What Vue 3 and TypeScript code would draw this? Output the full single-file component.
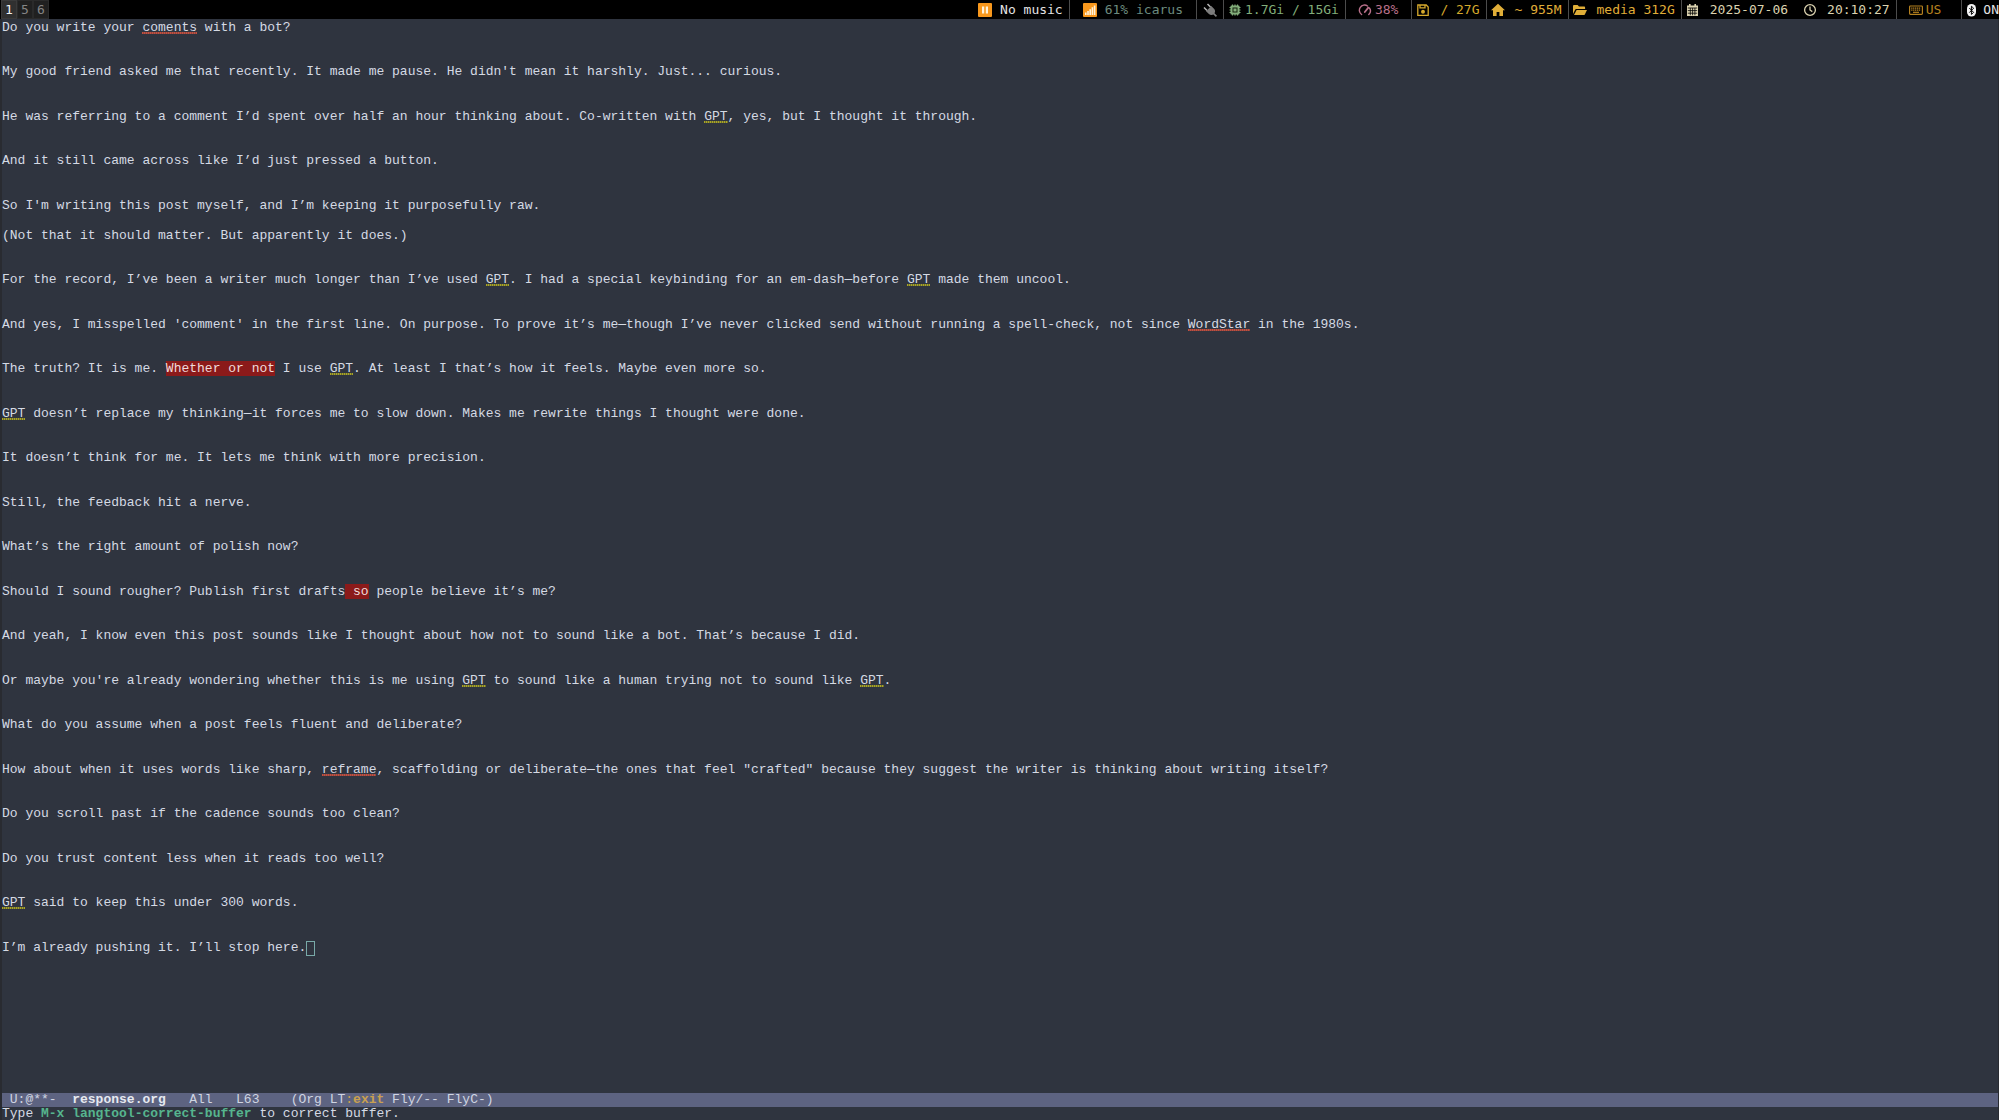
<script setup lang="ts">
type Kind = 'typo' | 'grammar' | 'flagged'
interface Run {
  text: string
  kind?: Kind
}

// {word} = spelling, [word] = style hint, <words> = flagged phrase
const source: string[] = [
  'Do you write your {coments} with a bot?', '', '',
  "My good friend asked me that recently. It made me pause. He didn't mean it harshly. Just... curious.", '', '',
  'He was referring to a comment I’d spent over half an hour thinking about. Co-written with [GPT], yes, but I thought it through.', '', '',
  'And it still came across like I’d just pressed a button.', '', '',
  "So I'm writing this post myself, and I’m keeping it purposefully raw.", '',
  '(Not that it should matter. But apparently it does.)', '', '',
  'For the record, I’ve been a writer much longer than I’ve used [GPT]. I had a special keybinding for an em-dash—before [GPT] made them uncool.', '', '',
  "And yes, I misspelled 'comment' in the first line. On purpose. To prove it’s me—though I’ve never clicked send without running a spell-check, not since {WordStar} in the 1980s.", '', '',
  'The truth? It is me. <Whether or not> I use [GPT]. At least I that’s how it feels. Maybe even more so.', '', '',
  '[GPT] doesn’t replace my thinking—it forces me to slow down. Makes me rewrite things I thought were done.', '', '',
  'It doesn’t think for me. It lets me think with more precision.', '', '',
  'Still, the feedback hit a nerve.', '', '',
  'What’s the right amount of polish now?', '', '',
  'Should I sound rougher? Publish first drafts< so> people believe it’s me?', '', '',
  'And yeah, I know even this post sounds like I thought about how not to sound like a bot. That’s because I did.', '', '',
  "Or maybe you're already wondering whether this is me using [GPT] to sound like a human trying not to sound like [GPT].", '', '',
  'What do you assume when a post feels fluent and deliberate?', '', '',
  'How about when it uses words like sharp, {reframe}, scaffolding or deliberate—the ones that feel "crafted" because they suggest the writer is thinking about writing itself?', '', '',
  'Do you scroll past if the cadence sounds too clean?', '', '',
  'Do you trust content less when it reads too well?', '', '',
  '[GPT] said to keep this under 300 words.', '', '',
  'I’m already pushing it. I’ll stop here.',
]

const kinds: Record<string, Kind> = { '{': 'typo', '[': 'grammar', '<': 'flagged' }

function parse(line: string): Run[] {
  return line
    .split(/(\{[^}]*\}|\[[^\]]*\]|<[^>]*>)/)
    .filter((part) => part !== '')
    .map((part) => {
      const kind = kinds[part[0]]
      return kind ? { text: part.slice(1, -1), kind } : { text: part }
    })
}

const lines: Run[][] = source.map(parse)
const workspaces = [1, 5, 6]
const current = 1

// Column spacing is significant in the mode line
const modeFlags = ' U:@**-  '
const modePosition = '   All   L63    (Org LT'
</script>

<template>
  <div class="screen">
    <header class="bar">
      <nav class="spaces" aria-label="Workspaces">
        <button v-for="w in workspaces" :key="w" type="button" class="space" :class="{ active: w === current }">{{ w }}</button>
      </nav>
      <div class="status">
        <span class="seg white flush">
          <svg viewBox="0 0 14 14"><rect width="14" height="14" rx="1" fill="#f8981d" /><path d="M4 3.500h2.200v7H4zM7.800 3.500H10v7H7.800z" fill="#fff3dc" /></svg>
          <span>No music</span>
        </span>
        <span class="seg mint roomy">
          <svg viewBox="0 0 14 14"><rect width="14" height="14" rx="1" fill="#f8981d" /><path d="M2 9.500h1.600V12H2zM4.200 8h1.600v4H4.200zM6.400 6.200H8V12H6.400zM8.600 4.300h1.600V12H8.600zM10.800 2.500h1.600V12h-1.600z" fill="#fff3dc" /></svg>
          <span>61% icarus</span>
        </span>
        <span class="seg plug">
          <svg viewBox="0 0 14 14"><path d="M1 4.500l3 3M4.500 1l3 3" stroke="#b5b5b5" stroke-width="1.500" /><path d="M3 8.200L8.300 3l2.900 3c1.200 1.500 1 3 .3 4.200L14 12.800 12.900 14l-2.500-2.400c-1.500.8-3.300.6-4.500-.5z" fill="#7c7c7c" /></svg>
        </span>
        <span class="seg green tight">
          <svg viewBox="0 0 14 14"><path d="M4.500 1.500v11M7 1.500v11M9.500 1.500v11M1.500 4.500h11M1.500 7h11M1.500 9.500h11" stroke="currentColor" stroke-width="1.200" /><rect x="2.500" y="2.500" width="9" height="9" rx="1" fill="currentColor" /><rect x="5" y="5" width="4" height="4" fill="none" stroke="#16240f" /></svg>
          <span>1.7Gi / 15Gi</span>
        </span>
        <span class="seg pink tight padded">
          <svg viewBox="0 0 14 14" fill="none" stroke="currentColor" stroke-width="1.400" stroke-linecap="round"><path d="M3.600 11.500A5 5 0 1 1 9.500 3M11.400 5a5 5 0 0 1-.6 6.500" /><path d="M6.800 9l3.500-4.400" stroke-width="1.800" /></svg>
          <span>38%</span>
        </span>
        <span class="seg gold">
          <svg viewBox="0 0 14 14" fill="none" stroke="currentColor" stroke-width="1.300"><path d="M1.800 2h8.400l2 2v8.300H1.800z" /><path d="M4 2v2.800h5V2" /><circle cx="7" cy="8.700" r="1.300" fill="currentColor" /></svg>
          <span>/ 27G</span>
        </span>
        <span class="seg amber">
          <svg viewBox="0 0 14 14"><path d="M7 .8L0 7.300h2V13h3.600V9h2.800v4H12V7.300h2z" fill="currentColor" /></svg>
          <span>~ 955M</span>
        </span>
        <span class="seg amber">
          <svg viewBox="0 0 14 14"><path d="M0 11V3.200C0 2.500.5 2 1.200 2h3.400L6 3.500h5c.7 0 1.100.5 1.100 1.200V6H3.600c-.8 0-1.200.3-1.600 1z" fill="currentColor" /><path d="M3.600 7H14l-2.200 4.400c-.3.400-.6.600-1 .6H1z" fill="currentColor" /></svg>
          <span>media 312G</span>
        </span>
        <span class="seg cream">
          <svg viewBox="0 0 14 14"><path d="M1 2.500h2V1h1.600v1.500h3.800V1H10v1.500h2V13H1z" fill="currentColor" /><path d="M1.800 5h9.400M1.800 7.600h9.400M1.800 10.200h9.400M4.300 5v7.300M6.600 5v7.300M8.900 5v7.300" stroke="#000" stroke-width=".8" /></svg>
          <span>2025-07-06</span>
          <svg class="clock" viewBox="0 0 14 14" fill="none" stroke="currentColor" stroke-width="1.300"><circle cx="7" cy="7" r="5.400" /><path d="M7 3.500V7l2.300 1.600" /></svg>
          <span>20:10:27</span>
        </span>
        <span class="seg bronze tight keyboard">
          <svg viewBox="0 0 14 14"><rect x=".6" y="3" width="12.800" height="8.400" rx=".8" fill="none" stroke="currentColor" stroke-width="1.200" /><path d="M2.200 5.200h9.600M2.200 7.200h9.600" stroke="currentColor" stroke-width="1.200" stroke-dasharray="1.300 .6" /><path d="M4 9.300h6" stroke="currentColor" stroke-width="1.200" /></svg>
          <span>US</span>
        </span>
        <span class="seg white tight last">
          <svg viewBox="0 0 14 14"><rect x="1" y="1" width="9" height="12.500" rx="4.500" fill="#f4f4f4" /><path d="M3.300 5l4.300 4.400-2.200 2V3.200l2.200 2L3.300 9.600" fill="none" stroke="#000" /></svg>
          <span>ON</span>
        </span>
      </div>
    </header>

    <div class="frame">
      <main class="buffer">
        <p v-for="(line, i) in lines" :key="i" class="line"><span v-for="(run, j) in line" :key="j" :class="run.kind">{{ run.text }}</span><span v-if="i === lines.length - 1" class="cursor"></span></p>
      </main>
      <div class="modeline">{{ modeFlags }}<b>response.org</b>{{ modePosition }}<span class="exit">:<b>exit</b></span> Fly/-- FlyC-)</div>
      <footer class="echo">Type <b>M-x langtool-correct-buffer</b> to correct buffer.</footer>
    </div>
  </div>
</template>

<style>
body {
  margin: 0;
  background: #2f343f;
}
</style>

<style scoped>
.screen {
  display: flex;
  flex-direction: column;
  min-height: 100vh;
  overflow: hidden;
  background: #2f343f;
  color: #d5dae4;
  font-family: "Liberation Mono", monospace;
  font-size: 13px;
}

.bar {
  display: flex;
  justify-content: space-between;
  height: 19px;
  background: #000;
  font-family: "DejaVu Sans Mono", monospace;
}
.spaces {
  display: flex;
  padding-left: 1px;
}
.space {
  box-sizing: border-box;
  width: 16px;
  height: 19px;
  padding: 0;
  border: 1px solid #2a2a2a;
  background: #202020;
  color: #858585;
  font: inherit;
  line-height: 17px;
}
.space.active {
  border-color: #3a3a3a;
  background: #303030;
  color: #f2f2f2;
}

.status {
  display: flex;
  line-height: 18px;
  white-space: pre;
}
.seg {
  display: flex;
  box-sizing: border-box;
  align-items: center;
  gap: 10px;
  height: 19px;
  padding: 1px 6px 0 4px;
  border-right: 1px solid #4c4c4c;
}
.seg svg {
  flex: none;
  width: 14px;
  height: 14px;
}
.flush { gap: 8px; }
.roomy { gap: 8px; padding: 1px 13px 0; }
.plug { padding: 1px 6px 0; }
.tight { gap: 3px; }
.padded { padding: 1px 13px 0 12px; }
.keyboard { padding: 1px 20px 0 12px; }
.last { padding-right: 0; border-right: 0; }
.clock { margin-left: 5px; }

.white { color: #e4e4e4; }
.mint { color: #6c8a7e; }
.green { color: #82ad7a; }
.pink { color: #b9708a; }
.gold { color: #d6a92c; }
.amber { color: #e0ae38; }
.cream { color: #dcd3b0; }
.bronze { color: #b5811f; }

.frame {
  display: flex;
  flex: 1;
  flex-direction: column;
  border: 1px solid #292b31;
  border-width: 0 1px 0 2px;
}
.buffer {
  display: grid;
  flex: 1;
  grid-template-rows: repeat(72, 1fr);
  padding: 2px 0 4px;
}
.line {
  margin: 0;
  line-height: 14px;
  white-space: pre;
}
.typo,
.grammar {
  background: repeating-linear-gradient(90deg, #c2503f 0 1px, #93453f 1px 2px) left 0 bottom 1px / 100% 2px no-repeat;
}
.grammar {
  background-image: repeating-linear-gradient(90deg, #a9a524 0 1px, #6d6d2e 1px 2px);
}
.flagged {
  background: #8b1a1a;
  color: #f0dcdc;
}
.cursor {
  display: inline-block;
  box-sizing: border-box;
  width: 9px;
  height: 15px;
  margin-bottom: -1px;
  border: 1px solid #79a9a8;
  vertical-align: top;
}

.modeline {
  height: 14px;
  background: #5d6381;
  color: #d0d5e2;
  line-height: 14px;
  white-space: pre;
}
.modeline > b {
  color: #e6e9f0;
}
.exit {
  color: #c9a050;
}
.echo {
  height: 13px;
  line-height: 13px;
  white-space: pre;
}
.echo b {
  color: #56b58e;
}
</style>
